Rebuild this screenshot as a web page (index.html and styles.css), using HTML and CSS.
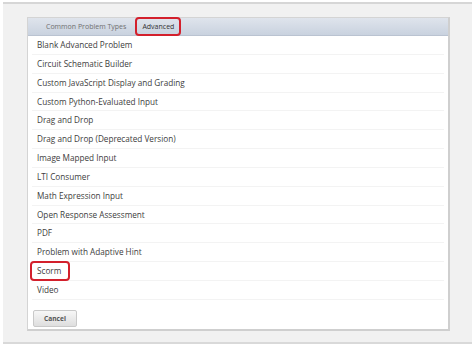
FILE: index.html
```html
<!DOCTYPE html>
<html lang="en">
  <head>
    <meta charset="UTF-8" />
    <meta name="viewport" content="width=device-width, initial-scale=1.0" />
    <title>Add Advanced Problem</title>
    <link rel="stylesheet" href="styles.css">
  </head>
  <body>
    <div class="frame">
      <div class="panel">
        <div class="tabs">
          <span class="tab">Common Problem Types</span>
          <span class="tab active">Advanced</span>
        </div>

        <ul class="types">
          <li>Blank Advanced Problem</li>
          <li>Circuit Schematic Builder</li>
          <li>Custom JavaScript Display and Grading</li>
          <li>Custom Python-Evaluated Input</li>
          <li>Drag and Drop</li>
          <li>Drag and Drop (Deprecated Version)</li>
          <li>Image Mapped Input</li>
          <li>LTI Consumer</li>
          <li>Math Expression Input</li>
          <li>Open Response Assessment</li>
          <li>PDF</li>
          <li>Problem with Adaptive Hint</li>
          <li><span class="marked">Scorm</span></li>
          <li>Video</li>
        </ul>

        <div class="actions">
          <button class="cancel">Cancel</button>
        </div>
      </div>
    </div>
  </body>
</html>
```

FILE: styles.css
```css
* {
  margin: 0;
  padding: 0;
  box-sizing: border-box;
}

body {
  background: #ffffff;
  font-family: "Open Sans", sans-serif;
  padding: 2px 2px 3px 3px;
}

.frame {
  height: 342px;
  background: #f1f1f1;
  border-top: 2px solid #d6d6d6;
  border-bottom: 2px solid #d9d9d9;
  padding: 13px 22px 0 24px;
}

.panel {
  background: #ffffff;
  border: 1px solid #d4d4d4;
  border-right: 2px solid #cfcfcf;
  border-bottom: 2px solid #cfcfcf;
  height: 314px;
}

.tabs {
  display: flex;
  height: 18px;
  padding-left: 13px;
  background: linear-gradient(#dfe4ec, #c9d2df);
  border-bottom: 1px solid #bac3d1;
}

.tab {
  position: relative;
  font-size: 7px;
  line-height: 17px;
  color: #707070;
  padding: 0 5px;
}

.tab.active {
  color: #333333;
  margin-left: 6px;
}

.tab.active::after {
  content: "";
  position: absolute;
  left: -2px;
  right: -2px;
  top: -1px;
  bottom: -1px;
  border: 2px solid #d3202c;
  border-radius: 4px;
}

.types {
  list-style: none;
  padding: 0 4px;
}

.types li {
  height: 18.85px;
  line-height: 18px;
  font-size: 8.2px;
  color: #3d3d3d;
  padding-left: 5px;
  border-bottom: 1px solid #f3f3f3;
}

.marked {
  position: relative;
}

.marked::after {
  content: "";
  position: absolute;
  left: -7px;
  right: -9px;
  top: -4px;
  bottom: -5px;
  border: 2px solid #d3202c;
  border-radius: 4px;
}

.actions {
  padding: 4px 0 0 5px;
}

.cancel {
  width: 44px;
  height: 17px;
  font-family: "Open Sans", sans-serif;
  font-size: 6.6px;
  font-weight: bold;
  color: #555555;
  background: linear-gradient(#f7f7f7, #dedede);
  border: 1px solid #c9c9c9;
  border-radius: 2px;
}
```
